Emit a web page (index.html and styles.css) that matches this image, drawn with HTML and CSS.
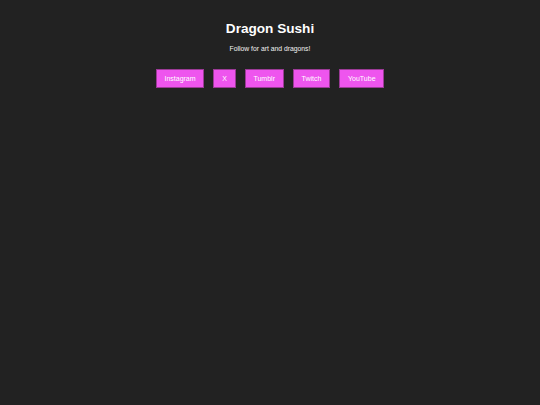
FILE: index.html
```html
<!DOCTYPE html>
<html>
<head>
<meta charset="utf-8">
<link rel="stylesheet" href="styles.css">
</head>
<body>
<main class="page">
  <h1 class="title">Dragon Sushi</h1>
  <p class="tagline">Follow for art and dragons!</p>
  <nav class="links">
    <a class="btn" href="#">Instagram</a>
    <a class="btn" href="#">X</a>
    <a class="btn" href="#">Tumblr</a>
    <a class="btn" href="#">Twitch</a>
    <a class="btn" href="#">YouTube</a>
  </nav>
</main>
</body>
</html>
```
FILE: styles.css
```css
html, body {
  margin: 0;
  padding: 0;
  background: #222222;
  height: 100%;
}
body {
  font-family: "Liberation Sans", Arial, sans-serif;
  color: #ffffff;
}
.page {
  display: flex;
  flex-direction: column;
  align-items: center;
  padding-top: 20px;
}
.title {
  margin: 0;
  font-size: 13.6px;
  font-weight: bold;
  line-height: 18px;
}
.tagline {
  margin: 6px 0 0;
  font-size: 6.8px;
  line-height: 9px;
  color: #f2f2f2;
}
.links {
  display: flex;
  gap: 9px;
  margin-top: 16px;
}
.btn {
  display: block;
  background: #ee55ee;
  border: 1px solid #9b3a96;
  color: #ffffff;
  text-decoration: none;
  font-size: 7px;
  line-height: 8px;
  padding: 4.5px 7.8px;
}
```
